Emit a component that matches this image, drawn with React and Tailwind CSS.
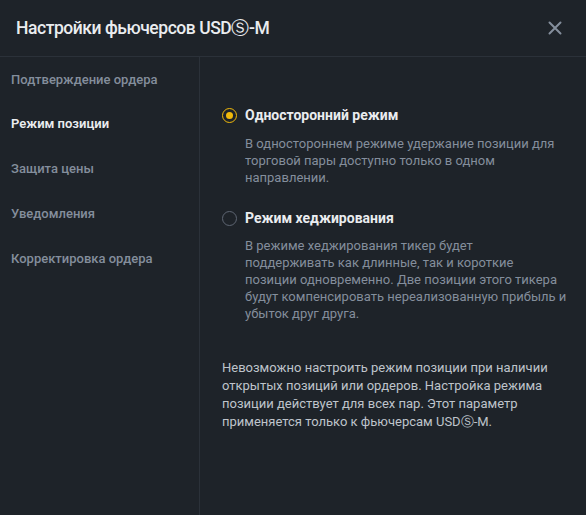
export default function App() {
  const nav = [
    "Подтверждение ордера",
    "Режим позиции",
    "Защита цены",
    "Уведомления",
    "Корректировка ордера",
  ];
  return (
    <div className="w-[586px] h-[515px] bg-[#1e2329] flex flex-col overflow-hidden" style={{ fontFamily: "Roboto, 'Noto Sans', sans-serif" }}>
      <div className="h-[57px] flex items-center justify-between pl-[16px] pr-[24px] border-b border-[#2b3139] shrink-0">
        <div className="text-[17.5px] text-[#eaecef] font-medium tracking-[-0.45px]">Настройки фьючерсов USDⓈ-M</div>
        <svg width="14" height="14" viewBox="0 0 14 14" className="text-[#848e9c]">
          <path d="M1.5 1.5 L12.5 12.5 M12.5 1.5 L1.5 12.5" stroke="currentColor" strokeWidth="2" strokeLinecap="round" />
        </svg>
      </div>
      <div className="flex flex-1 min-h-0">
        <div className="w-[200px] border-r border-[#2b3139] shrink-0 flex flex-col">
          {nav.map((n, i) => (
            <div key={n} className={`h-[44.8px] flex items-center pl-[11px] text-[13px] ${i === 1 ? "text-[#eaecef] font-semibold" : "text-[#848e9c] font-medium"}`}>{n}</div>
          ))}
        </div>
        <div className="flex-1 pl-[22px] pr-[10px] pt-[48px]">
          <div className="flex items-center gap-[8px]">
            <span className="w-[15px] h-[15px] rounded-full border-[1.5px] border-[#f0b90b] flex items-center justify-center">
              <span className="w-[7px] h-[7px] rounded-full bg-[#f0b90b]"></span>
            </span>
            <span className="text-[14px] font-bold text-[#eaecef]">Односторонний режим</span>
          </div>
          <p className="mt-[9px] ml-[23px] text-[13px] leading-[17px] text-[#848e9c]">
            В одностороннем режиме удержание позиции для<br />торговой пары доступно только в одном<br />направлении.
          </p>
          <div className="flex items-center gap-[8px] mt-[22px]">
            <span className="w-[15px] h-[15px] rounded-full border-[1.5px] border-[#5e6673]"></span>
            <span className="text-[14px] font-bold text-[#eaecef]">Режим хеджирования</span>
          </div>
          <p className="mt-[8px] ml-[23px] text-[13px] leading-[17px] text-[#848e9c] whitespace-nowrap">
            В режиме хеджирования тикер будет<br />поддерживать как длинные, так и короткие<br />позиции одновременно. Две позиции этого тикера<br />будут компенсировать нереализованную прибыль и<br />убыток друг друга.
          </p>
          <p className="mt-[37px] text-[13px] leading-[18px] text-[#bfc4cb] whitespace-nowrap">
            Невозможно настроить режим позиции при наличии<br />открытых позиций или ордеров. Настройка режима<br />позиции действует для всех пар. Этот параметр<br />применяется только к фьючерсам USDⓈ-M.
          </p>
        </div>
      </div>
    </div>
  );
}
